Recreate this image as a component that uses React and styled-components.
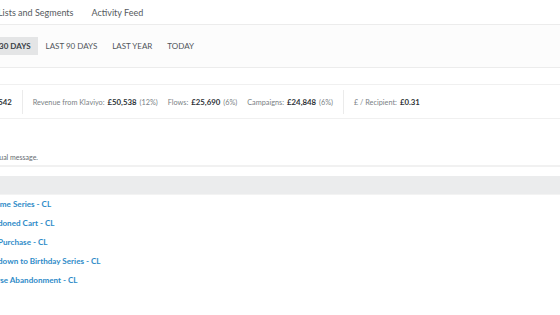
import styled, { createGlobalStyle } from "styled-components";

const Global = createGlobalStyle`
  html, body { margin: 0; padding: 0; background: #fff; }
  body { font-family: "Lato", "Liberation Sans", sans-serif; overflow: hidden; }
`

const Page = styled.div`
  width: 560px;
  height: 315px;
  overflow: hidden;
`

const Tabs = styled.nav`
  display: flex;
  align-items: center;
  gap: 18px;
  height: 24px;
  border-bottom: 1px solid #ececec;
`

const Tab = styled.span`
  font-size: 9px;
  color: #555a60;
  white-space: nowrap;
  margin-left: ${p => p.$shift || 0}px;
`

const FilterBar = styled.div`
  display: flex;
  align-items: center;
  height: 42px;
  background: #fcfcfc;
  border-bottom: 1px solid #ececec;
`

const Filter = styled.button`
  all: unset;
  display: flex;
  align-items: center;
  height: 18px;
  padding: 0 7.5px;
  font-size: 8px;
  white-space: nowrap;
  color: ${p => (p.$active ? "#3a3f45" : "#50555b")};
  font-weight: ${p => (p.$active ? 700 : 400)};
  background: ${p => (p.$active ? "#e4e5e6" : "transparent")};
  margin-left: ${p => p.$shift || 0}px;
`

const Stats = styled.div`
  display: flex;
  align-items: center;
  gap: 10px;
  height: 33px;
  margin-top: 16px;
  border-top: 1px solid #f0f0f0;
  border-bottom: 1px solid #f0f0f0;
  font-size: 7.3px;
  color: #7a7f85;
  white-space: nowrap;
`

const Stat = styled.span`
  display: flex;
  align-items: baseline;
  gap: 3px;
  margin-left: ${p => p.$shift || 0}px;
  b { color: #2f3338; font-weight: 700; font-size: 7.8px; }
`

const Sep = styled.span`
  width: 1px;
  height: 24px;
  background: #ebebeb;
`

const Note = styled.p`
  margin: 34px 0 0;
  padding-bottom: 4px;
  font-size: 7px;
  color: #666b70;
  white-space: nowrap;
  border-bottom: 2px solid #f1f1f1;
  text-indent: ${p => p.$shift || 0}px;
`

const HeadBar = styled.div`
  height: 18px;
  margin-top: 9px;
  background: #ebeced;
  border-bottom: 1px solid #f3f3f3;
`

const List = styled.ul`
  list-style: none;
  margin: -1px 0 0;
  padding: 0;
`

const Row = styled.li`
  display: flex;
  align-items: center;
  height: 19px;
`

const FlowLink = styled.a`
  font-size: 8.1px;
  font-weight: 700;
  color: #2e8bc8;
  text-decoration: none;
  white-space: nowrap;
  margin-left: ${p => p.$shift || 0}px;
`

const flows = [
  { name: "Welcome Series - CL", shift: -23 },
  { name: "Abandoned Cart - CL", shift: -21 },
  { name: "Post-Purchase - CL", shift: -21 },
  { name: "Countdown to Birthday Series - CL", shift: -24 },
  { name: "Browse Abandonment - CL", shift: -19 },
]

export default function App() {
  return (
    <Page>
      <Global />
      <Tabs>
        <Tab $shift={-2}>Lists and Segments</Tab>
        <Tab>Activity Feed</Tab>
      </Tabs>
      <FilterBar>
        <Filter $active $shift={-29}>LAST 30 DAYS</Filter>
        <Filter>LAST 90 DAYS</Filter>
        <Filter>LAST YEAR</Filter>
        <Filter>TODAY</Filter>
      </FilterBar>
      <Stats>
        <Stat $shift={-55}>Recipients: <b>162,542</b></Stat>
        <Sep />
        <Stat>Revenue from Klaviyo: <b>£50,538</b> (12%)</Stat>
        <Stat>Flows: <b>£25,690</b> (6%)</Stat>
        <Stat>Campaigns: <b>£24,848</b> (6%)</Stat>
        <Sep />
        <Stat>£ / Recipient: <b>£0.31</b></Stat>
      </Stats>
      <Note $shift={-75}>Revenue from an individual message.</Note>
      <HeadBar />
      <List>
        {flows.map(f => (
          <Row key={f.name}>
            <FlowLink href="#" $shift={f.shift}>{f.name}</FlowLink>
          </Row>
        ))}
      </List>
    </Page>
  )
}
